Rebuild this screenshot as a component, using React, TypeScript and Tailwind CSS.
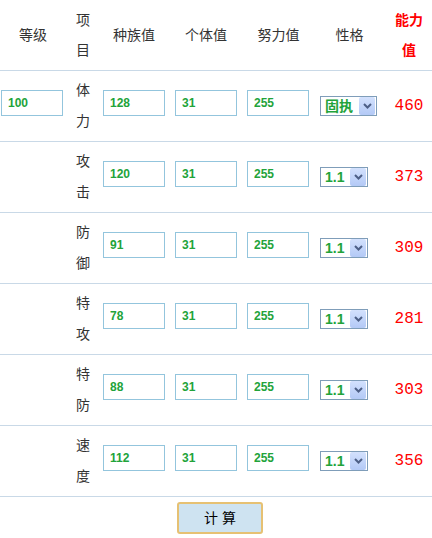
const rows = [
  { name: "体力", base: "128", nature: "固执", value: "460", first: true },
  { name: "攻击", base: "120", nature: "1.1", value: "373" },
  { name: "防御", base: "91", nature: "1.1", value: "309" },
  { name: "特攻", base: "78", nature: "1.1", value: "281" },
  { name: "特防", base: "88", nature: "1.1", value: "303" },
  { name: "速度", base: "112", nature: "1.1", value: "356" },
]

const Field = ({ value, className }: { value: string; className: string }) => (
  <input
    type="text"
    defaultValue={value}
    className={`w-[62px] h-[26px] mb-[6px] border border-[#93c5dd] bg-white px-[6px] text-[12px] font-bold text-[#22a33a] font-['Liberation_Sans',sans-serif] outline-none ${className}`}
  />
)

const Picker = ({ label }: { label: string }) => (
  <div className="ml-[7px] inline-flex h-[20px] items-center border border-[#7f9db9] bg-white">
    <span className="pl-[4px] pr-[6px] text-[14px] leading-[18px] font-bold text-[#22a33a]">{label}</span>
    <span className="mr-[1px] flex h-[18px] w-[16px] items-center justify-center rounded-[2px] bg-gradient-to-b from-[#d3e1fd] to-[#b3c9f6]">
      <svg width="9" height="6" viewBox="0 0 9 6">
        <path d="M1 1 L4.5 4.5 L8 1" fill="none" stroke="#4d5f86" strokeWidth="2" />
      </svg>
    </span>
  </div>
)

export default function App() {
  return (
    <div className="w-[432px] h-[538px] bg-white text-[#333] font-['Liberation_Sans','Noto_Sans_CJK_SC',sans-serif] text-[14px]">
      <div className="flex h-[71px] items-center border-b border-[#c9d9e7] text-center leading-[30px]">
        <div className="w-[66px]">等级</div>
        <div className="w-[34px]"><div className="mx-auto w-[14px]">项目</div></div>
        <div className="w-[68px]">种族值</div>
        <div className="w-[76px]">个体值</div>
        <div className="w-[69px]">努力值</div>
        <div className="w-[73px]">性格</div>
        <div className="w-[46px]"><div className="mx-auto w-[28px] font-bold text-[#ff0000]">能力值</div></div>
      </div>

      {rows.map((r) => (
        <div key={r.name} className="flex h-[71px] items-center border-b border-[#c9d9e7]">
          <div className="w-[66px]">{r.first && <Field value="100" className="ml-[1px]" />}</div>
          <div className="w-[34px]"><div className="mx-auto w-[14px] leading-[31px]">{r.name}</div></div>
          <div className="w-[68px]"><Field value={r.base} className="ml-[3px]" /></div>
          <div className="w-[76px]"><Field value="31" className="ml-[7px]" /></div>
          <div className="w-[69px]"><Field value="255" className="ml-[3px]" /></div>
          <div className="w-[73px]"><Picker label={r.nature} /></div>
          <div className="w-[46px] text-center font-['Liberation_Mono',monospace] text-[16px] text-[#ff0000]">{r.value}</div>
        </div>
      ))}

      <div className="flex pt-[5px] pl-[177px]">
        <button className="h-[32px] w-[86px] rounded-[3px] border-2 border-[#e6c173] bg-[#cee3f1] text-[14px] text-black">计 算</button>
      </div>
    </div>
  )
}
